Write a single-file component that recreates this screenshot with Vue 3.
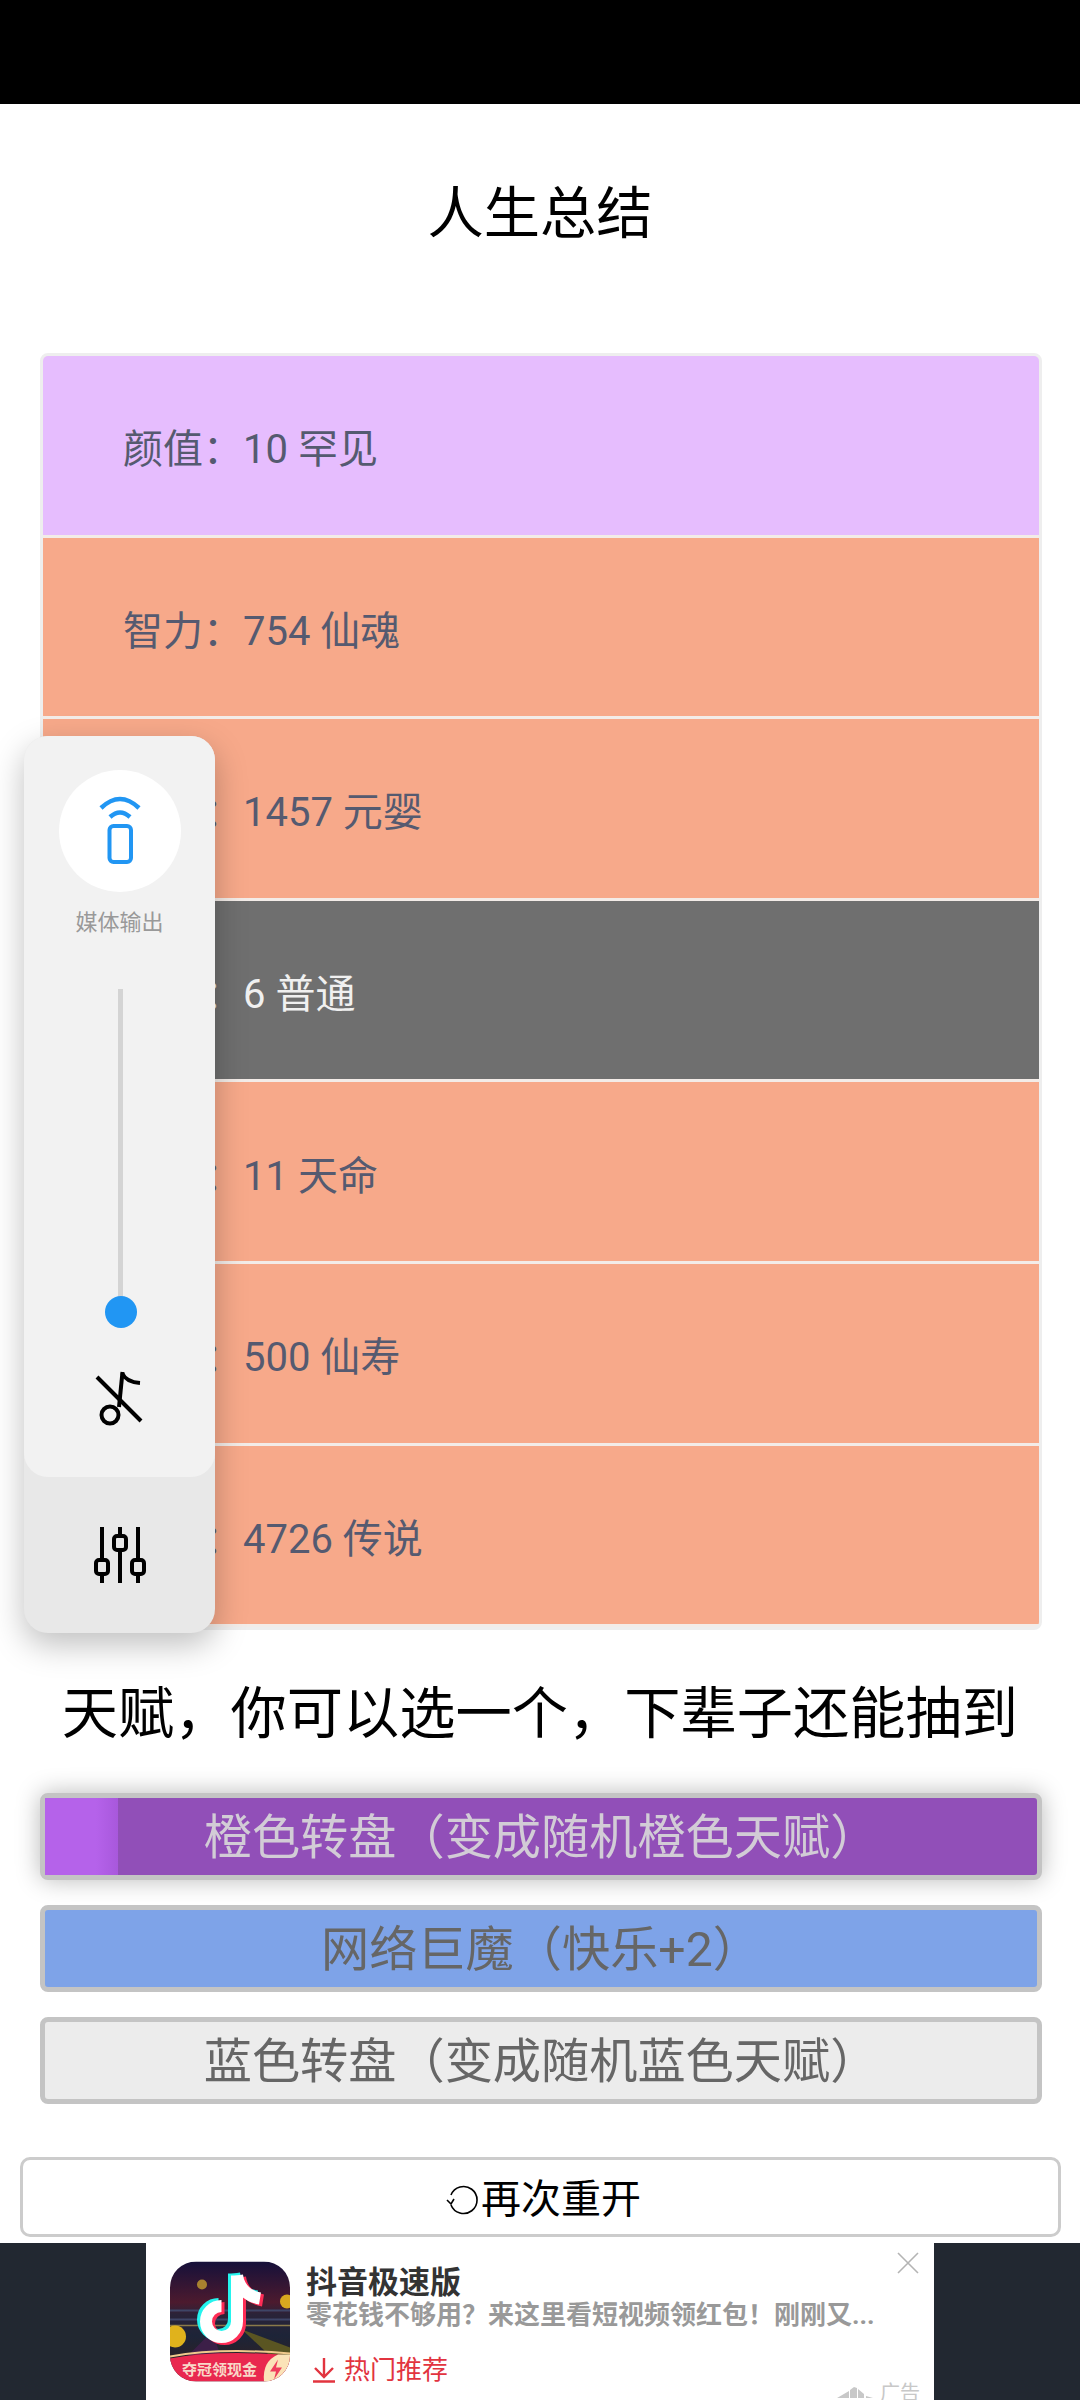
<script setup>
const rows = [
  { label: '颜值', value: '10 罕见', tone: 'purple' },
  { label: '智力', value: '754 仙魂', tone: 'orange' },
  { label: '体质', value: '1457 元婴', tone: 'orange' },
  { label: '家境', value: '6 普通', tone: 'grey' },
  { label: '快乐', value: '11 天命', tone: 'orange' },
  { label: '享年', value: '500 仙寿', tone: 'orange' },
  { label: '总评', value: '4726 传说', tone: 'orange' },
]

const talents = [
  { name: '橙色转盘\uFF08变成随机橙色天赋\uFF09', tone: 'picked' },
  { name: '网络巨魔\uFF08快乐+2\uFF09', tone: 'blue' },
  { name: '蓝色转盘\uFF08变成随机蓝色天赋\uFF09', tone: 'plain' },
]

const colon = '\uFF1A'
const heading = '天赋\uFF0C你可以选一个\uFF0C下辈子还能抽到'
const adDesc = '零花钱不够用\uFF1F来这里看短视频领红包\uFF01刚刚又...'
</script>

<template>
  <div class="page">
    <div class="status"></div>
    <h1 class="title">人生总结</h1>

    <ul class="summary">
      <li v-for="row in rows" :key="row.label" class="row" :class="row.tone">
        {{ row.label }}{{ colon }}{{ row.value }}
      </li>
    </ul>

    <h2 class="subtitle">{{ heading }}</h2>

    <div class="talents">
      <button v-for="t in talents" :key="t.name" type="button" class="talent" :class="t.tone">
        <span v-if="t.tone === 'picked'" class="progress"></span>
        <span class="talent-name">{{ t.name }}</span>
      </button>
    </div>

    <button type="button" class="restart">
      <svg class="restart-icon" viewBox="0 0 32 32" aria-hidden="true">
        <path d="M5 12 A13.5 13.5 0 1 1 5 22" fill="none" stroke="#000" stroke-width="1.6" />
        <path d="M1 17 L5 21 L8 16" fill="none" stroke="#000" stroke-width="1.6" />
      </svg>
      <span>再次重开</span>
    </button>

    <div class="ad-strip">
      <div class="ad">
        <svg class="ad-logo" viewBox="0 0 120 120" aria-hidden="true">
          <defs>
            <linearGradient id="sky" x1="0" y1="0" x2="0" y2="1">
              <stop offset="0" stop-color="#15103a" />
              <stop offset="0.34" stop-color="#4c1a2e" />
              <stop offset="0.44" stop-color="#2a2338" />
              <stop offset="0.62" stop-color="#1d2438" />
              <stop offset="0.82" stop-color="#2b2126" />
            </linearGradient>
            <clipPath id="logo-clip"><rect width="120" height="120" rx="26" /></clipPath>
          </defs>
          <g clip-path="url(#logo-clip)">
            <rect width="120" height="120" fill="url(#sky)" />
            <path d="M0 49 H120 M0 58 H120" stroke="#3e4566" stroke-width="2" />
            <path d="M0 64 H120" stroke="#8a7a4a" stroke-width="1.5" />
            <path d="M72 68 L120 86 V98 H104 Z" fill="#5a5522" />
            <path d="M42 70 L14 98 H52 Z" fill="#3c1f48" />
            <circle cx="32" cy="23" r="5" fill="#a8822f" />
            <circle cx="117" cy="40" r="7" fill="#d8a81f" />
            <circle cx="5" cy="75" r="11" fill="#e0b21c" />
            <g fill="none" stroke-width="12">
              <g stroke="#25f4ee" transform="translate(-3 -2)">
                <path d="M67 14 V60 A15.5 15.5 0 1 1 51.5 44.5" />
                <path d="M67 14 C69 27 78 35 90 37" />
              </g>
              <g stroke="#fe2c55" transform="translate(3 2)">
                <path d="M67 14 V60 A15.5 15.5 0 1 1 51.5 44.5" />
                <path d="M67 14 C69 27 78 35 90 37" />
              </g>
              <g stroke="#fff">
                <path d="M67 14 V60 A15.5 15.5 0 1 1 51.5 44.5" />
                <path d="M67 14 C69 27 78 35 90 37" />
              </g>
            </g>
            <path d="M0 97 Q50 88 120 94 V120 H0 Z" fill="#e9284f" />
            <path d="M0 95 Q50 86 120 92" fill="none" stroke="#f0c98c" stroke-width="2" />
            <path d="M94 120 Q92 100 108 93 H120 V120 Z" fill="#fbe3b8" />
            <path d="M108 98 L100 110 H106 L104 118 L112 106 H106 Z" fill="#ef3d5c" />
            <text x="12" y="113" class="ad-logo-text">夺冠领现金</text>
          </g>
        </svg>
        <div class="ad-body">
          <div class="ad-name">抖音极速版</div>
          <div class="ad-desc">{{ adDesc }}</div>
          <div class="ad-tag">
            <svg class="ad-down" viewBox="0 0 22 25" aria-hidden="true">
              <path d="M11 0 V18 M2 10 L11 19 L20 10 M0 23.5 H22" fill="none" stroke="#e2343f" stroke-width="2.4" />
            </svg>
            <span>热门推荐</span>
          </div>
        </div>
        <svg class="ad-close" viewBox="0 0 22 22" aria-hidden="true">
          <path d="M1 1 L21 21 M21 1 L1 21" stroke="#b4b4b4" stroke-width="1.6" />
        </svg>
        <div class="ad-mark">
          <svg viewBox="0 0 37 12" class="ad-mark-icon" aria-hidden="true">
            <path d="M0 11 L12 4 V11 Z M13 3 L17 0 L20 1 V11 H13 Z M21 2 L27 7 V11 H21 Z M29 9 L36 11 H29 Z" fill="#c8c8c8" />
          </svg>
          <span>广告</span>
        </div>
      </div>
    </div>

    <aside class="volume">
      <div class="volume-main">
        <div class="output">
          <svg viewBox="0 0 122 122" class="output-icon" aria-hidden="true">
            <rect x="50.5" y="56" width="21.5" height="36" rx="4" fill="none" stroke="#2196f3" stroke-width="4" />
            <path d="M42 38 Q61 20 80 38" fill="none" stroke="#2196f3" stroke-width="4.5" />
            <path d="M51 47 Q61 38 71 47" fill="none" stroke="#2196f3" stroke-width="4.5" />
          </svg>
        </div>
        <div class="output-label">媒体输出</div>
        <div class="slider"><span class="thumb"></span></div>
        <svg viewBox="0 0 60 60" class="mute" aria-hidden="true">
          <path d="M7 7 L51 51" stroke="#000" stroke-width="4" />
          <circle cx="20" cy="45" r="8.5" fill="none" stroke="#000" stroke-width="4" />
          <path d="M29 37 L32.5 2" stroke="#000" stroke-width="4" fill="none" />
          <path d="M32 3 Q36 12 50 13" stroke="#000" stroke-width="4" fill="none" />
        </svg>
      </div>
      <div class="volume-foot">
        <svg viewBox="0 0 60 60" class="eq" aria-hidden="true">
          <g fill="none" stroke="#000" stroke-width="4">
            <path d="M12 2 V35 M12 49 V58 M30 2 V11 M30 25 V58 M48 2 V35 M48 49 V58" />
            <rect x="6" y="35" width="12" height="14" rx="3" />
            <rect x="24" y="11" width="12" height="14" rx="3" />
            <rect x="42" y="35" width="12" height="14" rx="3" />
          </g>
        </svg>
      </div>
    </aside>
  </div>
</template>

<style>
html, body { margin: 0; background: #fff; }
</style>

<style scoped>
.page {
  position: relative;
  width: 1080px;
  height: 2400px;
  overflow: hidden;
  background: #fff;
  display: flex;
  flex-direction: column;
  font-family: Roboto, "Noto Sans CJK SC", sans-serif;
}
.status { height: 104px; background: #000; flex-shrink: 0; }
.title {
  margin: 70px 0 99px;
  font-size: 56.25px;
  line-height: 80px;
  font-weight: 400;
  text-align: center;
  color: #000;
}

.summary {
  list-style: none;
  margin: 0 38px 0 40px;
  padding: 0 0 3px;
  display: flex;
  flex-direction: column;
  gap: 3px;
  border: 3px solid #eee;
  border-radius: 8px;
  overflow: hidden;
  background: #f3ece8;
}
.row {
  height: 178.6px;
  display: flex;
  align-items: center;
  padding-left: 80px;
  padding-top: 2px;
  box-sizing: border-box;
  font-size: 40px;
  color: #555a70;
}
.row.purple { background: #e6bdfe; }
.row.orange { background: #f7a98a; }
.row.grey { background: #6f6f6f; color: #f0f0f0; }

.subtitle {
  margin: 44px 0 39px;
  font-size: 56.25px;
  line-height: 80px;
  font-weight: 400;
  text-align: center;
  color: #000;
}

.talents {
  margin: 0 38px 0 40px;
  display: flex;
  flex-direction: column;
  gap: 25px;
}
.talent {
  position: relative;
  height: 87px;
  padding: 0 0 9px;
  border: 5px solid #c4c4c4;
  border-radius: 8px;
  font-family: inherit;
  font-size: 48.2px;
  color: #666;
  overflow: hidden;
}
.talent-name { position: relative; }
.talent.picked {
  background: #914fb8;
  color: #d2ccd6;
  box-shadow: 0 0 24px rgba(0, 0, 0, 0.28);
  overflow: visible;
}
.talent.blue { background: #7ea3e8; }
.talent.plain { background: #ececec; }
.progress {
  position: absolute;
  left: 0;
  top: 0;
  bottom: 0;
  width: 73px;
  background: linear-gradient(90deg, #b562ea 70%, #a858dc);
}

.restart {
  margin: 53px 19px 0 20px;
  height: 80px;
  flex-shrink: 0;
  padding: 0 0 3px 6px;
  display: flex;
  align-items: center;
  justify-content: center;
  gap: 3px;
  background: #fff;
  border: 3px solid #ccc;
  border-radius: 10px;
  font-family: inherit;
  font-size: 40px;
  color: #000;
}
.restart-icon { width: 32px; height: 32px; margin-top: 6px; }

.ad-strip {
  margin-top: 6px;
  flex: 1;
  min-height: 0;
  background: #222831;
  display: flex;
  justify-content: center;
}
.ad {
  position: relative;
  width: 788px;
  background: #fff;
  overflow: hidden;
  display: flex;
  gap: 16px;
  padding: 18px 0 0 24px;
  box-sizing: border-box;
}
.ad-logo { width: 120px; height: 121px; flex-shrink: 0; }
.ad-logo-text { font-size: 15px; font-weight: 700; fill: #f8d8c8; }
.ad-body { min-width: 0; }
.ad-name { font-size: 31px; line-height: 36px; font-weight: 700; color: #333; margin-top: 4px; }
.ad-desc { font-size: 26px; line-height: 28px; font-weight: 700; color: #999; white-space: nowrap; }
.ad-tag {
  display: flex;
  align-items: center;
  gap: 9px;
  margin: 23px 0 0 7px;
  font-size: 26px;
  line-height: 36px;
  color: #e2343f;
}
.ad-down { width: 22px; height: 25px; }
.ad-close {
  position: absolute;
  right: 15px;
  top: 9px;
  width: 22px;
  height: 22px;
}
.ad-mark {
  position: absolute;
  right: 14px;
  top: 136px;
  display: flex;
  align-items: center;
  gap: 6px;
  font-size: 20px;
  line-height: 28px;
  color: #c8c8c8;
}
.ad-mark-icon { width: 37px; height: 12px; }

.volume {
  position: absolute;
  left: 24px;
  top: 736px;
  width: 191px;
  height: 897px;
  border-radius: 24px;
  background: #e8e8e8;
  box-shadow: 0 12px 32px rgba(0, 0, 0, 0.25);
  display: flex;
  flex-direction: column;
}
.volume-main {
  height: 741px;
  background: #f2f2f2;
  border-radius: 24px;
  display: flex;
  flex-direction: column;
  align-items: center;
}
.output {
  width: 122px;
  height: 122px;
  margin-top: 34px;
  border-radius: 50%;
  background: #fff;
}
.output-icon { width: 122px; height: 122px; display: block; }
.output-label {
  margin-top: 15px;
  font-size: 22px;
  line-height: 32px;
  color: #999;
}
.slider {
  position: relative;
  width: 5px;
  height: 323px;
  margin-top: 50px;
  margin-left: 2px;
  background: #d4d4d4;
}
.thumb {
  position: absolute;
  left: -13.5px;
  bottom: -16px;
  width: 32px;
  height: 32px;
  border-radius: 50%;
  background: #2196f3;
}
.mute { width: 60px; height: 60px; margin-top: 58px; }
.volume-foot {
  flex: 1;
  display: flex;
  justify-content: center;
  padding-top: 48px;
  box-sizing: border-box;
}
.eq { width: 60px; height: 60px; }
</style>
